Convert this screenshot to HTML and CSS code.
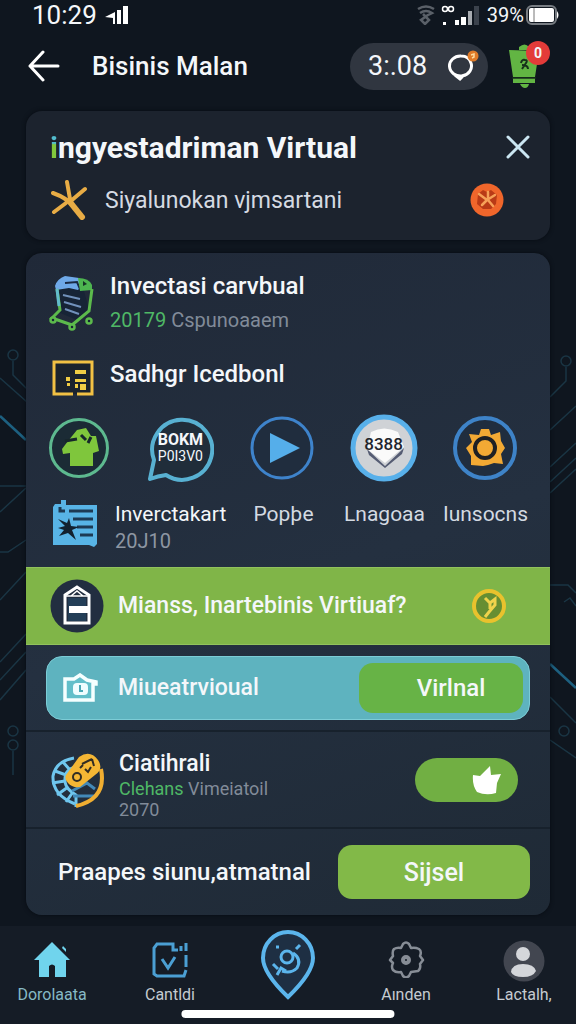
FILE: index.html
```html
<!DOCTYPE html>
<html lang="id">
<head>
  <meta charset="UTF-8">
  <meta name="viewport" content="width=device-width, initial-scale=1.0">
  <title>Bisinis Malan</title>
  <link rel="stylesheet" href="styles.css">
</head>
<body>
  <!-- circuit lines behind the cards -->
  <svg class="circuit" viewBox="0 0 576 1024" preserveAspectRatio="none" fill="none" aria-hidden="true">
    <g stroke="#1a3544" stroke-width="1.5">
      <circle cx="13" cy="355" r="5"/><path d="M13 361v14l14 14M0 378l27 24M0 486h26M0 512l26-24M0 552h8l18-12M0 600l26-28M0 662l26-28M0 680l26-28M0 700l26-30"/>
      <circle cx="13" cy="731" r="5"/><circle cx="13" cy="745" r="5"/><path d="M13 751v24"/>
      <circle cx="566" cy="361" r="5"/><path d="M566 367v14l-16 16M550 430l26-24M550 467l26-24M550 482l26-24M550 493l26-24M550 585h18l8 8M564 602l6-4 6 8M550 697l26 26M550 740l26 18"/>
      <circle cx="564" cy="731" r="5"/>
    </g>
    <path d="M0 416l26 24M550 664l26 24" stroke="#1d6080" stroke-width="2.5"/>
  </svg>

  <div class="status">
    <span class="time">10:29</span>
    <svg width="24" height="18" viewBox="0 0 24 18" fill="#fff"><path d="M0 11l10-5v12H8v-6zM12 4h4v14h-4zM18 0h5v18h-5z"/></svg>
    <div class="status-right">
      <svg width="18" height="20" viewBox="0 0 18 20" fill="none" stroke="#5a6068" stroke-width="2.5"><path d="M1 4q8-5 16 0M3 8q6-4 12 0l-8 4M6 9l6 6-4 4-4-4 7-5"/></svg>
      <svg width="40" height="20" viewBox="0 0 40 20" fill="#fff"><circle cx="4" cy="4" r="2.5" fill="none" stroke="#fff" stroke-width="1.5"/><circle cx="10" cy="4" r="2.5" fill="none" stroke="#fff" stroke-width="1.5"/><path d="M2 17h3v3H2zM14 15h4v5h-4zM20 12h5v8h-5z"/><path d="M27 6h4v14h-4z" fill="#a7abb0"/><path d="M33 1h5v19h-5z" fill="#3b424c"/></svg>
      <span class="percent">39%</span>
      <svg width="34" height="20" viewBox="0 0 34 20"><rect x="1" y="1" width="29" height="18" rx="5" fill="none" stroke="#777c82" stroke-width="2"/><rect x="3" y="3" width="25" height="14" rx="2" fill="#fff"/><path d="M8 3v14" stroke="#777" /><path d="M31 6q3 4 0 8z" fill="#fff"/></svg>
    </div>
  </div>

  <header class="header">
    <button class="icon-btn" aria-label="Kembali">
      <svg width="32" height="32" viewBox="0 0 32 32" fill="none" stroke="#fff" stroke-width="3" stroke-linecap="round" stroke-linejoin="round"><path d="M30 16H2M15 2L2 16l13 14"/></svg>
    </button>
    <h1>Bisinis Malan</h1>
    <div class="pill">
      <span>3:.08</span>
      <svg width="32" height="32" viewBox="0 0 32 32"><path d="M13 6a11 10 0 1 0 10 7q-2-7-10-7M7 25l5 4 4-4" fill="none" stroke="#fff" stroke-width="3"/><circle cx="25" cy="6" r="5.5" fill="#e07b28"/><path d="M23 5l3-1v3l-2 1" fill="none" stroke="#ffdca0" stroke-width="1.5"/></svg>
    </div>
    <button class="icon-btn bell" aria-label="Notifikasi">
      <svg width="34" height="44" viewBox="0 0 34 44"><path d="M11 3q6-5 10 0v3H11zM1 6l30 1-4 26H5zM5 34h22v5H5zM12 40h9q-1 4-4 4t-5-4z" fill="#62b543"/><path d="M4 34h24" stroke="#17311b" stroke-width="1.5"/><path d="M13 19q1-4 4-3 3 0 1 3l-4 6M14 21q6 0 6 4" fill="none" stroke="#17311b" stroke-width="2"/></svg>
      <span class="badge">0</span>
    </button>
  </header>

  <main>
    <section class="card intro">
      <div class="intro-head">
        <h2><span class="first">i</span>ngyestadriman Virtual</h2>
        <button class="icon-btn" aria-label="Tutup">
          <svg width="24" height="24" viewBox="0 0 24 24" stroke="#cbe6f2" stroke-width="3" stroke-linecap="round"><path d="M2 2l20 20M22 2L2 22"/></svg>
        </button>
      </div>
      <div class="intro-row">
        <svg width="38" height="40" viewBox="0 0 38 40" fill="none" stroke="#e8ac45" stroke-width="4" stroke-linecap="round"><path d="M17 2l3 17M3 13q14 5 20 13M35 9L22 20M16 23L4 32"/><path d="M20 22l12 15" stroke-width="6"/></svg>
        <p>Siyalunokan vjmsartani</p>
        <svg class="coin" width="34" height="34" viewBox="0 0 34 34"><circle cx="17" cy="17" r="16.5" fill="#f0662b"/><path d="M8 11l5-4 4 2 4-2 6 5-1 9-5 5h-8l-6-5z" fill="#b93a16"/><path d="M9 11l8 6 8-5M18 9v6M17 17l-5 5M18 17l5 6" fill="none" stroke="#f6a057" stroke-width="2.5" stroke-linecap="round"/></svg>
      </div>
    </section>

    <section class="card">
      <div class="item">
        <svg width="46" height="56" viewBox="0 0 46 56" fill="none"><path d="M9 14l25-2 7 26-13 7L9 37z" fill="#172436"/><path d="M6 11q2-7 10-10l14 2 4 6-5 6-9-2-13 2z" fill="#6fa9e8"/><path d="M16 8l12-1 3 7" stroke="#1a2a44" stroke-width="2"/><path d="M29 3q11 0 14 7v5l-12 1z" fill="#4db550"/><path d="M34 6l4 3-4 2z" fill="#163326"/><path d="M8 14l3 21-8 8 20 7 17-14 3-22" stroke="#5cba4c" stroke-width="3"/><path d="M8 14l2 17" stroke="#62bccc" stroke-width="3"/><path d="M14 20l17 4M15 27l17 5M16 34l14 5" stroke="#7191bb" stroke-width="2"/><g fill="#172436" stroke="#5cba4c" stroke-width="2.5"><circle cx="4" cy="45" r="2.5"/><circle cx="23" cy="52" r="2.5"/><circle cx="40" cy="46" r="2.5"/></g></svg>
        <div>
          <h3>Invectasi carvbual</h3>
          <p class="sub"><span class="green">20179</span> Cspunoaaem</p>
        </div>
      </div>
      <div class="item second">
        <svg width="46" height="36" viewBox="0 0 46 36"><path d="M24 34H5V2h38v32H28" fill="#1b232d" stroke="#f2c144" stroke-width="3"/><path d="M26 10h11v4H26zM26 19h11v3H26zM31 24h6v6h-6zM26 24h3v4h-3zM17 17h4v4h-4zM18 23h3v3h-3z" fill="#f0cd45"/></svg>
        <h3>Sadhgr Icedbonl</h3>
      </div>

      <div class="grid circles">
        <button aria-label="Kaos"><svg width="62" height="64" viewBox="0 0 62 64"><circle cx="31" cy="32" r="28.500" fill="#1b2b35" stroke="#5db98f" stroke-width="3"/><path d="M14 33l6-8 9-11 9-2 5 8 5 0 3 15-6 2v13H22V37l-7 1z" fill="#7fc63c"/><path d="M17 25l12-2M33 19l5 5M43 21l-3 6" stroke="#17272b" stroke-width="3"/></svg></button>
        <button class="chat"><svg width="68" height="68" viewBox="0 0 68 68"><path d="M4 65l4-19A30 30 0 1 1 20 61q-8 1-16 4z" fill="#202d3a" stroke="#58b1d2" stroke-width="4" stroke-linejoin="round"/></svg><span class="chat-text"><b>BOKM</b>P0I3V0</span></button>
        <button aria-label="Putar"><svg width="64" height="64" viewBox="0 0 64 64"><circle cx="32" cy="32" r="30" fill="#202d3e" stroke="#3e83cb" stroke-width="3"/><path d="M20 17l30 15-30 15z" fill="#55aeea"/></svg></button>
        <button class="seal"><svg width="68" height="68" viewBox="0 0 68 68"><circle cx="34" cy="34" r="31" fill="#cfd2d6" stroke="#58b0ea" stroke-width="5"/><path d="M17 35l18 17 19-18-2 6-17 14-16-13z" fill="#555c73"/><path d="M21 18q13-7 27 0l6 15-19 16-18-14z" fill="#fafafa"/></svg><span class="seal-text">8388</span></button>
        <button aria-label="Setelan"><svg width="64" height="66" viewBox="0 0 64 66"><circle cx="32" cy="33" r="30" fill="#202d3e" stroke="#3e83c8" stroke-width="4"/><path d="M28 14h8l2 6 9-3 1 9 4 7-4 6 2 10-9-1-6 2-5 1-12-1v-9l-5-8 6-6-3-8 10 1z" fill="#f2a934"/><circle cx="32" cy="33" r="10" fill="#f2a934" stroke="#1e2024" stroke-width="4"/></svg></button>
      </div>
      <div class="grid labels">
        <svg width="46" height="50" viewBox="0 0 46 50"><path d="M3 5h6V1h5v5h31v39l-3 3-5-2H1V8z" fill="#58b4e6"/><path d="M17 12h24M21 20h20M25 28h16M28 36h13M8 8v4h5" stroke="#1d3a54" stroke-width="3" fill="none"/><path d="M6 20l9 4 2-5 2 8 8 1-7 3 4 10-8-7-9 3 5-6-6-2 7-2z" fill="#12212f"/></svg>
        <span class="wide">Inverctakart</span>
        <span>Popþe</span>
        <span>Lnagoaa</span>
        <span>Iunsocns</span>
        <small>20J10</small>
      </div>

      <div class="banner">
        <svg width="54" height="54" viewBox="0 0 54 54"><circle cx="27" cy="27" r="26.500" fill="#222e40"/><path d="M15 16L27 8l12 8v28H15z" fill="none" stroke="#fff" stroke-width="3"/><path d="M15 17h24M21 17l6-5 6 5" stroke="#fff" stroke-width="1.500" fill="none"/><path d="M18 19h18v23H18z" fill="#233e57"/><path d="M19 27h19v7H19z" fill="#fff"/></svg>
        <h3>Mianss, Inartebinis Virtiuaf?</h3>
        <svg class="coin" width="34" height="36" viewBox="0 0 34 36"><circle cx="17" cy="18" r="15" fill="#668e32" stroke="#e9c22d" stroke-width="4"/><path d="M13 10l5 5 5-4v6l-6 7-4 5M18 15v6" fill="none" stroke="#efd34c" stroke-width="3"/></svg>
      </div>

      <div class="teal-row">
        <div class="teal">
          <svg width="38" height="30" viewBox="0 0 38 30"><path d="M3 6h9l6-4 7 5 9 2v2h-3v16H3z" fill="#62bfca" stroke="#f5ffff" stroke-width="3.500"/><rect x="11" y="10" width="15" height="12" rx="4" fill="#effdff"/><path d="M18 12v6h3" stroke="#4aa9b7" stroke-width="2" fill="none"/></svg>
          <h3>Miueatrvioual</h3>
          <button>Virlnal</button>
        </div>
      </div>

      <div class="line-row">
        <svg width="56" height="58" viewBox="0 0 56 58" fill="none"><path d="M25 7Q7 10 4 25q-1 19 22 28" stroke="#6fc6ee" stroke-width="3"/><path d="M27 16q-12 2-11 15 1 7 11 13v12M14 11l7 8M6 20l11 4M3 32l13-2M8 44l11-8M17 51l7-10" stroke="#6fc6ee" stroke-width="3"/><path d="M23 40l15-8 8 6M24 45h22" stroke="#4389b8" stroke-width="3"/><path d="M52 18q6 30-25 37" stroke="#f0ae31" stroke-width="4"/><path d="M17 24L30 6q11-8 19 3 6 9-3 15L31 36q-8 1-12-4-4-4-2-8z" fill="#f4b634"/><g stroke="#302c24" stroke-width="2"><circle cx="28" cy="26" r="4"/><path d="M33 13l10-5M43 8l2 7M31 17l3-3M36 18l3 3 3-5"/></g></svg>
        <div class="line-text">
          <h3>Ciatihrali</h3>
          <p class="note"><span class="green">Clehans</span> Vimeiatoil</p>
          <p class="note">2070</p>
        </div>
        <label class="toggle">
          <input type="checkbox" checked aria-label="Ciatihrali">
          <svg width="30" height="30" viewBox="0 0 30 30" fill="#fff"><path d="M1 10l7 1L18 1l1 9 10-1-4 9-1 10q-10 3-19-1-5-7-4-17z"/></svg>
        </label>
      </div>

      <div class="line-row last">
        <h3>Praapes siunu,atmatnal</h3>
        <button class="submit">Sijsel</button>
      </div>
    </section>
  </main>

  <nav class="tabs">
    <a href="#" class="active"><svg width="38" height="38" viewBox="0 0 38 38" fill="#70d4ed"><path d="M1 20L19 2l18 18h-4v17H22V26q-3-3-6 0v11H6V20zM30 6l3 3v3l-4-4z"/></svg>Dorolaata</a>
    <a href="#"><svg width="38" height="38" viewBox="0 0 38 38" fill="none" stroke="#4b9fd3" stroke-width="3"><path d="M27 10h-5V4H6L3 8v26l3 2h27l2-6M30 6v5M35 3v8M35 15v12M11 19l6 9 7-11"/></svg>Cantldi</a>
    <a href="#" class="pin" aria-label="Lokasi"><svg width="56" height="70" viewBox="0 0 56 70" fill="none" stroke="#5bb5ec" stroke-width="4"><path d="M28 67Q3 43 3 28a25 26 0 0 1 50 0Q53 43 28 67z" fill="#1e2f43"/><g stroke-width="3"><circle cx="27" cy="27" r="6"/><path d="M33 23q9 6 4 15-6 6-15 3M17 45l4-7 5 3M13 34l5 5M36 19l4-4M16 17h3"/></g></svg></a>
    <a href="#"><svg width="38" height="38" viewBox="0 0 38 38" fill="none" stroke="#878d96" stroke-width="2.500" stroke-linejoin="round"><path d="M16 4q3-3 6 0l2 4q4-1 8 1 3 2 1 7l3 4-3 4q1 5-2 7l-7 1-2 4q-3 3-6 0l-2-4q-5 1-8-2-2-3 0-7l-3-3 3-4q-1-5 1-7 3-2 7-1z"/><circle cx="19" cy="20" r="3" stroke-width="4"/></svg>Aınden</a>
    <a href="#"><svg width="42" height="42" viewBox="0 0 42 42"><circle cx="21" cy="21" r="20.500" fill="#424650"/><circle cx="20" cy="14" r="7" fill="#d4d6da"/><path d="M8 32q1-8 12-8t13 7q-3 6-13 6T8 32z" fill="#d4d6da"/></svg>Lactalh,</a>
    <div class="home-bar"></div>
  </nav>
</body>
</html>
```
FILE: styles.css
```css
* { box-sizing: border-box; }
body { font-family: Roboto, 'Liberation Sans', sans-serif; background: #0f161f; color: #f4f7fa; margin: 0; min-height: 100vh; display: flex; flex-direction: column; position: relative; }
h1, h2, h3, p { margin: 0; white-space: nowrap; }
button { font-family: inherit; color: inherit; border: 0; padding: 0; background: none; cursor: pointer; }
svg { display: block; flex: none; }
.circuit { position: absolute; inset: 0; width: 100%; height: 100%; z-index: -1; }

.status { display: flex; align-items: center; gap: 8px; height: 30px; padding: 0 16px 0 32px; }
.time { font-size: 26px; }
.status-right { display: flex; align-items: center; gap: 6px; margin-left: auto; }
.percent { font-size: 20px; }
.status-right svg:last-child { margin-left: -4px; }

.header { display: flex; align-items: center; height: 72px; padding: 0 26px 0 28px; }
.header h1 { font-size: 26px; font-weight: 500; margin-left: 32px; }
.pill { display: flex; align-items: center; justify-content: space-between; width: 138px; height: 47px; margin-left: auto; padding: 0 8px 0 18px; border-radius: 24px; background: #303640; font-size: 27px; }
.icon-btn { position: relative; }
.bell { margin-left: 20px; padding-right: 8px; }
.badge { position: absolute; top: -3px; right: 0; width: 24px; height: 24px; border-radius: 50%; background: #e33b39; font-size: 14px; font-weight: 700; line-height: 24px; text-align: center; }

main { padding: 9px 26px 11px; }
.card { background: linear-gradient(160deg, #202938, #243040 50%, #1f2a36); border-radius: 16px; overflow: hidden; box-shadow: 0 0 4px #070c12; }
.card h3 { font-size: 24px; font-weight: 500; line-height: 28px; }
.intro { background: #1c232e; height: 129px; margin-bottom: 13px; padding: 15px 20px 0 24px; }
.intro-head { display: flex; align-items: center; justify-content: space-between; height: 42px; }
.intro h2 { font-size: 30px; font-weight: 700; }
.first { color: transparent; background: linear-gradient(#52bccd 38%, #82c83c 42%); background-clip: text; -webkit-background-clip: text; }
.intro-row { display: flex; align-items: center; gap: 17px; height: 64px; font-size: 23px; color: #d5dae2; }
.coin { margin-left: auto; margin-right: 26px; }

.item { display: flex; align-items: center; gap: 15px; padding: 19px 23px 0; }
.second { padding-top: 26px; }
.second h3 { margin-bottom: 8px; }
.sub { font-size: 20px; line-height: 28px; margin-top: 6px; color: #818b99; }
.green { color: #4fb866; }

.grid { display: grid; grid-template-columns: repeat(5, 1fr); justify-items: center; align-items: center; padding: 0 14px 0 2px; }
.circles { height: 68px; margin-top: 18px; }
.circles button { position: relative; }
.chat-text, .seal-text { position: absolute; inset: 0; display: flex; flex-direction: column; align-items: center; justify-content: center; font-size: 14px; line-height: 16px; }
.chat-text b { font-size: 16px; }
.seal-text { color: #23262d; font-size: 17px; font-weight: 500; padding-bottom: 8px; }
.labels { margin-top: 14px; grid-template-columns: 63px 118px repeat(3, 1fr); grid-template-rows: 36px 19px; padding: 0 14px 16px 26px; font-size: 21px; color: #d3dae2; }
.labels svg { grid-row: span 2; justify-self: start; }
.labels .wide { justify-self: start; color: #f4f7fa; }
.labels small { grid-column: 2; justify-self: start; grid-row: 2; font-size: 20px; line-height: 19px; color: #8d96a2; }

.banner { display: flex; align-items: center; gap: 14px; height: 78px; padding: 0 18px 0 24px; background: #80b548; border: 1px solid #91c25c; border-width: 1px 0; }
.banner .coin { margin-right: 26px; }
.card .banner h3, .card .teal h3, .card .line-text h3 { font-size: 23px; }
.teal-row { padding: 11px 20px 10px; }
.teal { display: flex; align-items: center; gap: 18px; height: 64px; padding: 0 6px 0 15px; border-radius: 16px; background: #5eb3bf; border: 1px solid #7cccd6; }
.teal button { width: 164px; height: 50px; margin-left: auto; padding-left: 20px; border-radius: 14px; background: #67b346; font-size: 24px; font-weight: 500; }
.line-row { display: flex; align-items: center; gap: 14px; height: 97px; padding: 0 20px 0 23px; border-top: 2px solid #17212c; }
.line-text { padding-top: 10px; }
.note { font-size: 18px; line-height: 21px; color: #818b99; }
.toggle { position: relative; margin: 0 12px 0 auto; }
.toggle input { appearance: none; display: block; width: 103px; height: 44px; margin: 0; border-radius: 22px; background: #71af43; }
.toggle svg { position: absolute; top: 7px; right: 16px; }
.last { height: 88px; padding-left: 32px; }
.submit { width: 192px; height: 54px; margin-left: auto; border-radius: 14px; background: #82b948; font-size: 25px; font-weight: 500; }

.tabs { position: relative; flex: 1; display: flex; justify-content: space-between; align-items: flex-start; background: #151c26; padding: 14px 16px 20px; }
.tabs a { display: flex; flex-direction: column; align-items: center; justify-content: space-between; width: 72px; height: 64px; font-size: 16px; line-height: 18px; color: #c5cbd1; text-decoration: none; }
.tabs .active { color: #86b9c5; }
.tabs .pin { margin-top: -10px; }
.home-bar { position: absolute; bottom: 6px; left: 50%; width: 37%; height: 8px; border-radius: 4px; background: #fff; transform: translateX(-50%); }
```
